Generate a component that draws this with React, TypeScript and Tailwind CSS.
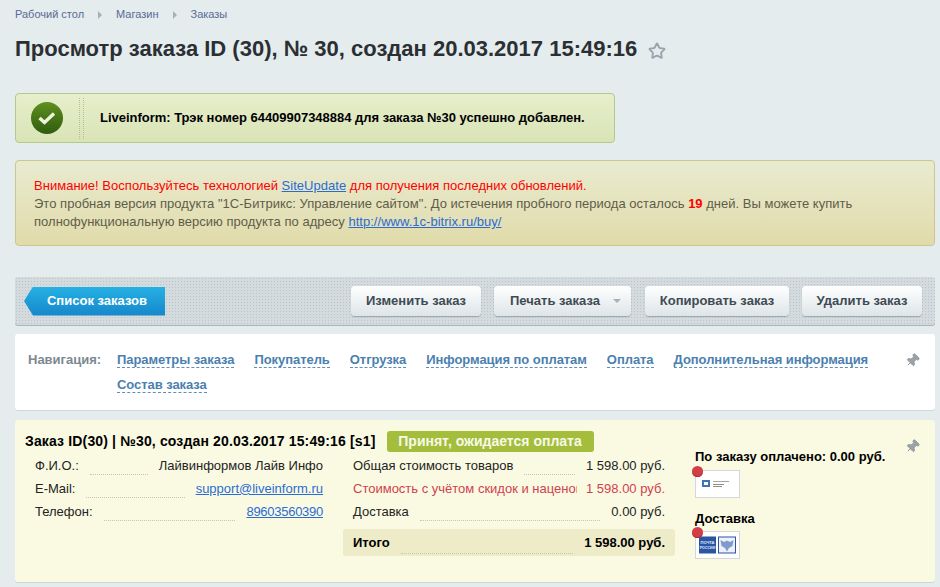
import { ReactNode } from "react";
import { Pin, Star } from "lucide-react";

const navItems = [
  "Параметры заказа",
  "Покупатель",
  "Отгрузка",
  "Информация по оплатам",
  "Оплата",
  "Дополнительная информация",
  "Состав заказа",
];

function Leader() {
  return <span className="mx-[11px] mb-[2px] min-w-0 flex-1 self-end border-b border-dotted border-[#c5c7b4]" />;
}

function Row({ label, value, className = "" }: { label: string; value: ReactNode; className?: string }) {
  return (
    <div className={`flex h-[23px] items-center whitespace-nowrap ${className}`}>
      <span>{label}</span>
      <Leader />
      <span>{value}</span>
    </div>
  );
}

function ToolButton({ children, className = "" }: { children: ReactNode; className?: string }) {
  return (
    <button className={`flex h-[30px] items-center justify-center rounded-[4px] bg-gradient-to-b from-white to-[#dde5e8] text-[13px] font-bold text-[#3f4b54] shadow-[0_1px_1px_#9aa5aa] ${className}`}>
      {children}
    </button>
  );
}

function Dot() {
  return <span className="absolute -top-[5px] -left-[4px] h-[11px] w-[11px] rounded-full bg-[#d33f46] shadow-[inset_0_-1px_1px_#a92c33]" />;
}

export default function App() {
  return (
    <div className="h-[587px] w-[940px] overflow-hidden bg-[#e4ecee] pr-[5px] pl-[15px] font-['Liberation_Sans',Arial,sans-serif]">
      <nav className="flex h-[28px] items-center pt-[1px] text-[11px] text-[#5a6a95]">
        <span>Рабочий стол</span>
        <span className="mx-[14px] h-0 w-0 border-y-[4px] border-l-[4px] border-y-transparent border-l-[#a7b0b5]" />
        <span>Магазин</span>
        <span className="mx-[14px] h-0 w-0 border-y-[4px] border-l-[4px] border-y-transparent border-l-[#a7b0b5]" />
        <span>Заказы</span>
      </nav>

      <div className="mt-[6px] flex h-[30px] items-center">
        <h1 className="text-[22px] leading-[30px] font-bold whitespace-nowrap text-[#2b2f33]">
          Просмотр заказа ID (30), № 30, создан 20.03.2017 15:49:16
        </h1>
        <Star size={18} strokeWidth={2.5} className="mt-[3px] ml-[11px] text-[#9aa3ae]" />
      </div>

      <div className="mt-[29px] flex h-[50px] w-[600px] items-center rounded-[4px] border border-[#b4c98c] bg-gradient-to-b from-[#e7eecb] to-[#d9e4b6]">
        <div className="ml-[15px] flex h-[32px] w-[32px] items-center justify-center rounded-full bg-gradient-to-b from-[#5f9020] to-[#2f5c0d]">
          <svg width="20" height="16" viewBox="0 0 20 16" fill="none">
            <path d="M2.5 8 L7.5 12.5 L17 3.5" stroke="#eef3dd" strokeWidth="3.4" />
          </svg>
        </div>
        <div className="mr-[16px] ml-[16px] h-[41px] w-[5px] border-x border-dotted border-[#b5bf97]" />
        <p className="text-[13px] font-bold tracking-[-0.02px] text-black">
          Liveinform: Трэк номер 64409907348884 для заказа №30 успешно добавлен.
        </p>
      </div>

      <div className="mt-[17px] h-[86px] rounded-[4px] border border-[#cfc591] bg-gradient-to-b from-[#e9ebd0] to-[#e1dbaa] px-[18px] pt-[16px] text-[13px] leading-[18px] tracking-[0.02px] text-[#5f5d48]">
        <p className="text-[#ff0000]">
          Внимание! Воспользуйтесь технологией <a className="text-[#2b6cd4] underline">SiteUpdate</a> для получения последних обновлений.
        </p>
        <p>
          Это пробная версия продукта "1С-Битрикс: Управление сайтом". До истечения пробного периода осталось{" "}
          <b className="text-[#ff0000]">19</b> дней. Вы можете купить
        </p>
        <p>
          полнофункциональную версию продукта по адресу <a className="text-[#2b6cd4] underline">http://www.1c-bitrix.ru/buy/</a>
        </p>
      </div>

      <div className="mt-[31px] flex h-[48px] items-center rounded-[3px] bg-[#d3dbde] bg-[radial-gradient(#bac4c9_1px,transparent_1px)] bg-[length:3px_3px] pr-[13px] pl-[9px] shadow-[0_1px_0_#a9b4b9]">
        <button className="flex h-[29px] w-[141px] items-center justify-center bg-gradient-to-b from-[#25b1e4] to-[#1787cb] pl-[5px] text-[13px] font-bold text-white [clip-path:polygon(0_50%,9px_0,100%_0,100%_100%,9px_100%)]">
          Список заказов
        </button>
        <ToolButton className="ml-auto w-[130px]">Изменить заказ</ToolButton>
        <ToolButton className="ml-[13px] w-[137px] !justify-start pl-[16px]">
          Печать заказа
          <span className="ml-[13px] h-0 w-0 border-x-[4px] border-t-[4px] border-x-transparent border-t-[#a9b1b6]" />
        </ToolButton>
        <ToolButton className="ml-[14px] w-[144px]">Копировать заказ</ToolButton>
        <ToolButton className="ml-[13px] w-[120px]">Удалить заказ</ToolButton>
      </div>

      <div className="relative mt-[9px] flex h-[76px] rounded-[3px] bg-white pt-[15px] pl-[13px] shadow-[0_1px_0_#cfd6d9]">
        <span className="w-[89px] shrink-0 text-[13px] leading-[22px] font-bold text-[#7d8890]">Навигация:</span>
        <div className="flex w-[770px] flex-wrap content-start gap-x-[20px] gap-y-[6px]">
          {navItems.map((item) => (
            <a key={item} className="h-[19px] border-b border-dashed border-[#5c8fbc] text-[13px] leading-[22px] font-bold tracking-[-0.06px] whitespace-nowrap text-[#4b7fb0]">
              {item}
            </a>
          ))}
        </div>
        <Pin size={15} fill="#9aa3a8" strokeWidth={1.5} className="absolute top-[19px] right-[15px] rotate-45 text-[#8d969b]" />
      </div>

      <div className="relative mt-[10px] h-[162px] rounded-[3px] bg-[#fafae2] pt-[11px] pl-[10px] shadow-[0_1px_0_#cfd6d9]">
        <div className="flex h-[21px] items-center">
          <span className="text-[14px] font-bold tracking-[0.15px] whitespace-nowrap text-black">Заказ ID(30) | №30, создан 20.03.2017 15:49:16 [s1]</span>
          <span className="ml-[11px] flex h-[21px] w-[207px] items-center justify-center rounded-[3px] bg-[#a4bd3d] text-[14px] font-bold text-[#f7f9e6]">
            Принят, ожидается оплата
          </span>
        </div>

        <div className="flex text-[13px] text-[#23231f]">
          <div className="mt-[2px] ml-[10px] w-[288px]">
            <Row label="Ф.И.О.:" value="Лайвинформов Лайв Инфо" />
            <Row label="E-Mail:" value={<a className="text-[#2b6cd4] underline">support@liveinform.ru</a>} />
            <Row label="Телефон:" value={<a className="tracking-[-0.27px] text-[#2b6cd4] underline">89603560390</a>} />
          </div>

          <div className="mt-[2px] ml-[20px] w-[332px]">
            <div className="px-[10px]">
              <Row label="Общая стоимость товаров" value="1 598.00 руб." />
              <div className="flex h-[23px] items-center justify-between whitespace-nowrap text-[#d13f50]">
                <span className="w-[224px] overflow-hidden">Стоимость с учётом скидок и наценок</span>
                <span>1 598.00 руб.</span>
              </div>
              <Row label="Доставка" value="0.00 руб." />
            </div>
            <div className="mt-[6px] flex h-[27px] items-center rounded-[3px] bg-[#eeebc9] px-[10px] font-bold whitespace-nowrap text-black">
              <span>Итого</span>
              <Leader />
              <span>1 598.00 руб.</span>
            </div>
          </div>

          <div className="-mt-[3px] ml-[20px] w-[200px] text-black">
            <p className="text-[13px] leading-[16px] font-bold">По заказу оплачено: 0.00 руб.</p>
            <div className="relative mt-[5px] flex h-[28px] w-[45px] items-center justify-center border border-[#d5d8d8] bg-white">
              <Dot />
              <svg width="32" height="10" viewBox="0 0 32 10">
                <rect x="0" y="1" width="8" height="7" fill="#3f74b5" />
                <rect x="2" y="3" width="4" height="3" fill="#fff" />
                <rect x="11" y="2" width="16" height="1" fill="#a6a6a6" />
                <rect x="11" y="5" width="11" height="1" fill="#8c8c8c" />
                <rect x="11" y="7" width="9" height="1" fill="#8c8c8c" />
              </svg>
            </div>
            <p className="mt-[13px] text-[13px] leading-[16px] font-bold">Доставка</p>
            <div className="relative mt-[4px] flex h-[28px] w-[45px] items-center justify-center border border-[#d5d8d8] bg-white">
              <Dot />
              <svg width="37" height="18" viewBox="0 0 37 18">
                <rect width="17" height="17" y="0.5" fill="#2a55a5" />
                <text x="8.5" y="7.5" textAnchor="middle" fontSize="4" fontWeight="bold" fill="#e6ebf5">ПОЧТА</text>
                <text x="8.5" y="12.5" textAnchor="middle" fontSize="3.6" fontWeight="bold" fill="#e6ebf5">РОССИИ</text>
                <rect x="19.5" y="1" width="17" height="16" fill="#eef1f8" stroke="#2a55a5" />
                <path d="M21.5 4 L25 6 L28 4.5 L31 6 L34.5 4 L33.5 10 L30 12 L28 15.5 L26 12 L22.5 10 Z" fill="#7f9acb" />
              </svg>
            </div>
          </div>
        </div>

        <Pin size={15} fill="#9aa3a8" strokeWidth={1.5} className="absolute top-[19px] right-[15px] rotate-45 text-[#8d969b]" />
      </div>
    </div>
  );
}
